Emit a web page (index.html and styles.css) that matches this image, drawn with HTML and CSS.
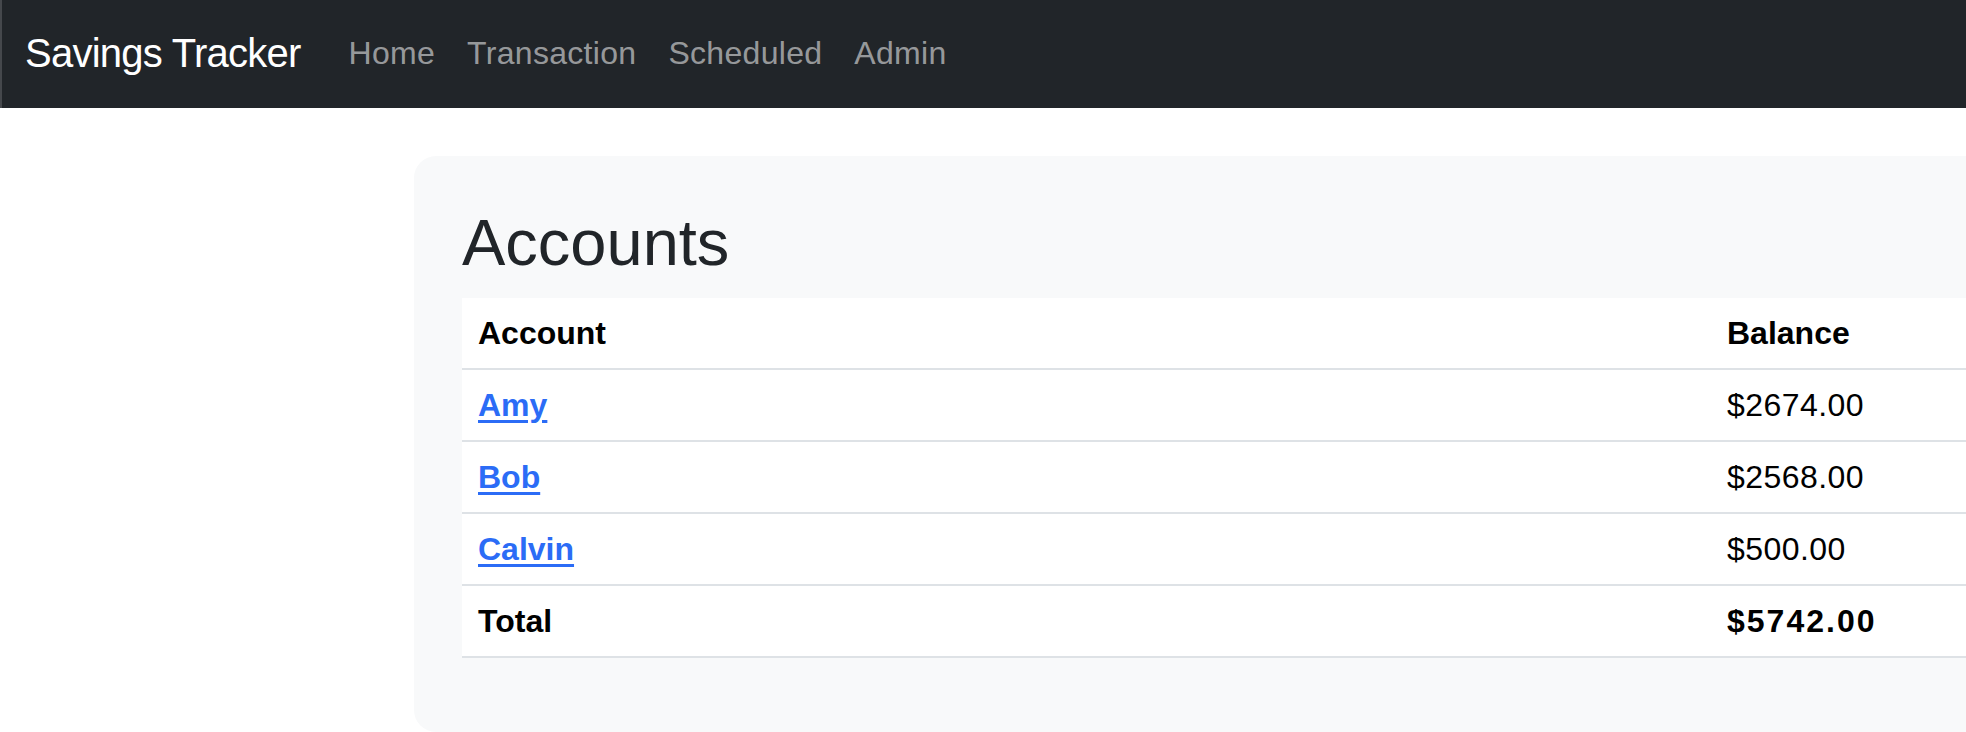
FILE: index.html
```html
<!DOCTYPE html>
<html lang="en">
<head>
<meta charset="utf-8">
<title>Savings Tracker</title>
<link rel="stylesheet" href="styles.css">
</head>
<body>
<nav class="navbar">
  <a class="brand" href="#">Savings Tracker</a>
  <ul class="nav">
    <li><a class="nav-link" href="#">Home</a></li>
    <li><a class="nav-link" href="#">Transaction</a></li>
    <li><a class="nav-link" href="#">Scheduled</a></li>
    <li><a class="nav-link" href="#">Admin</a></li>
  </ul>
</nav>
<main class="main">
  <section class="card">
    <h2 class="title">Accounts</h2>
    <table class="table">
      <thead>
        <tr><th class="col-account">Account</th><th class="col-balance">Balance</th></tr>
      </thead>
      <tbody>
        <tr><td><a class="acct" href="#">Amy</a></td><td class="amount">$2674.00</td></tr>
        <tr><td><a class="acct" href="#">Bob</a></td><td class="amount">$2568.00</td></tr>
        <tr><td><a class="acct" href="#">Calvin</a></td><td class="amount">$500.00</td></tr>
        <tr class="total"><td>Total</td><td class="amount">$5742.00</td></tr>
      </tbody>
    </table>
  </section>
</main>
</body>
</html>
```
FILE: styles.css
```css
html, body {
  margin: 0;
  padding: 0;
}
body {
  font-family: "Liberation Sans", Arial, sans-serif;
  font-size: 32px;
  line-height: 1.5;
  color: #212529;
  background: #fff;
  overflow: hidden;
  width: 1966px;
  height: 732px;
}
.navbar {
  display: flex;
  align-items: center;
  height: 108px;
  box-sizing: border-box;
  padding: 0 0 2px 23px;
  background: #212529;
  border-left: 2px solid #45484c;
}
.brand {
  color: #fff;
  text-decoration: none;
  font-size: 40px;
  line-height: 60px;
  letter-spacing: -0.75px;
  margin-right: 32px;
}
.nav {
  display: flex;
  list-style: none;
  margin: 0;
  padding: 0;
}
.nav-link {
  display: block;
  padding: 0 16px;
  color: rgba(255, 255, 255, 0.55);
  text-decoration: none;
  line-height: 48px;
  letter-spacing: 0.3px;
}
.main {
  padding: 48px 0 0 414px;
}
.card {
  width: 1700px;
  box-sizing: border-box;
  padding: 48px;
  background: #f8f9fa;
  border-radius: 22px;
}
.title {
  margin: 0 0 16px 0;
  font-size: 65px;
  font-weight: 400;
  line-height: 1.2;
  color: #212529;
}
.table {
  width: 100%;
  border-collapse: collapse;
  background: #fff;
  color: #000;
  margin-bottom: 26px;
}
.table th,
.table td {
  text-align: left;
  padding: 12px 16px;
  line-height: 46px;
  border-bottom: 2px solid #dee2e6;
}
.table th {
  font-weight: 700;
}
.col-account {
  width: 1217px;
}
.amount {
  letter-spacing: 0.45px;
}
.acct {
  color: #2b6cf6;
  font-weight: 700;
  text-decoration: underline;
  text-underline-offset: 4px;
  text-decoration-thickness: 3px;
}
.total td {
  font-weight: 700;
}
.total .amount {
  letter-spacing: 2px;
}
```
